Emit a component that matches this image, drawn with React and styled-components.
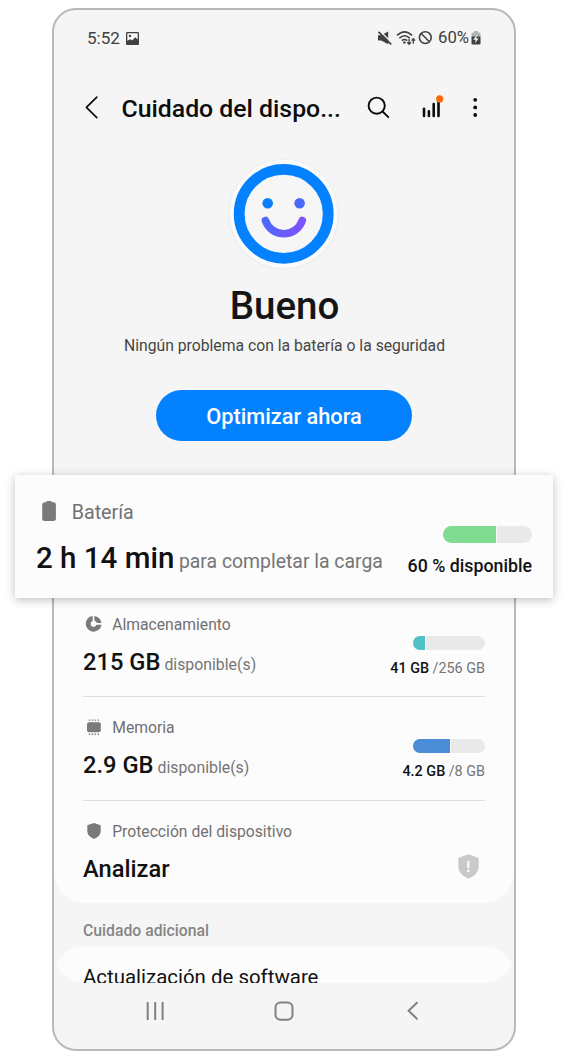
import React from "react";
import styled, { createGlobalStyle, css } from "styled-components";

const GlobalStyle = createGlobalStyle`
  *, *::before, *::after { box-sizing: border-box; }
  body { margin: 0; background: #fff; }
  svg { display: block; flex: none; overflow: visible; }
`;

const Page = styled.div`
  width: 568px;
  height: 1058px;
  padding: 8px 52px 7px;
  font-family: Roboto, "Liberation Sans", sans-serif;
  white-space: nowrap;
  color: #111;
`;

const Phone = styled.main`
  display: flex;
  flex-direction: column;
  height: 1043px;
  border: 2px solid #b9b9b9;
  border-radius: 24px;
  background: #f5f5f5;
`;

const StatusBar = styled.div`
  display: flex;
  align-items: center;
  justify-content: space-between;
  height: 56px;
  padding: 0 33px;
  color: #404040;
`;

const StatusGroup = styled.div`
  display: flex;
  align-items: center;
`;

const StatusGap = styled.span`
  width: ${(p) => (p.$small ? 2 : 4)}px;
`;

const Clock = styled.span`
  width: 39px;
  font-size: 17.1px;
  line-height: 20px;
`;

const BatteryLevel = styled.span`
  width: 33px;
  margin-left: 5px;
  font-size: 16.7px;
  line-height: 20px;
`;

const Header = styled.header`
  display: flex;
  align-items: center;
  height: 83px;
  padding: 0 36px 0 31px;
`;

const Title = styled.h1`
  flex: 1;
  margin: 1px 0 0 22.5px;
  font-size: 24.8px;
  font-weight: 500;
  line-height: 31px;
  color: #0c0c0c;
`;

const Actions = styled.div`
  display: flex;
  align-items: center;
  & > :nth-child(2) { margin: 0 27px 0 30px; }
`;

const Hero = styled.section`
  display: flex;
  flex-direction: column;
  align-items: center;
  height: 326px;
  padding-top: 10px;
`;

const State = styled.h2`
  margin: 14px 0 0 1px;
  font-size: 38.500px;
  font-weight: 500;
  line-height: 46px;
  color: #151515;
`;

const Summary = styled.p`
  margin: 7px 0 0 1px;
  font-size: 15.73px;
  line-height: 20px;
  color: #454545;
`;

const OptimizeButton = styled.button`
  width: 256px;
  height: 51px;
  margin-top: 34px;
  padding: 1px 0 0;
  border: 0;
  border-radius: 26px;
  background: #0381fe;
  color: #fff;
  font-family: inherit;
  font-size: 21.75px;
  font-weight: 500;
  line-height: 51px;
`;

const BatteryCard = styled.section`
  position: relative;
  z-index: 1;
  display: flex;
  justify-content: space-between;
  flex: none;
  height: 123px;
  margin: 0 -39px;
  padding: 25px 21px 0 21px;
  background: #fcfcfc;
  box-shadow: 0 2px 9px rgba(0, 0, 0, 0.25);
`;

const Panel = styled.section`
  flex: none;
  height: 305px;
  padding: 0 29px;
  border-radius: 0 0 31px 31px;
  background: #fcfcfc;
`;

const Item = styled.div`
  display: flex;
  justify-content: space-between;
  height: ${(p) => (p.$first ? 99 : 104)}px;
  padding-top: ${(p) => (p.$first ? 16 : 20)}px;
  ${(p) => !p.$last && css`border-bottom: 1px solid #e0e0e0;`}
`;

const Label = styled.div`
  display: flex;
  align-items: center;
  height: ${(p) => (p.$large ? 24 : 20)}px;
  padding-left: ${(p) => (p.$large ? 4.3 : 2)}px;
  gap: ${(p) => (p.$large ? 13.4 : 9.2)}px;
  font-size: ${(p) => (p.$large ? 19.7 : 15.7)}px;
  color: #717171;
  & > svg { margin-bottom: ${(p) => (p.$large ? 2 : 0)}px; }
`;

const Value = styled.div`
  display: flex;
  align-items: baseline;
  gap: ${(p) => (p.$large ? 4.6 : 4)}px;
  margin-top: ${(p) => (p.$large ? 17 : 13.5)}px;
  line-height: ${(p) => (p.$large ? 34 : 28)}px;
`;

const Amount = styled.strong`
  font-size: ${(p) => (p.$large ? 29.5 : 23.7)}px;
  font-weight: 500;
`;

const Unit = styled.span`
  font-size: ${(p) => (p.$large ? 19.4 : 15.85)}px;
  color: #757575;
`;

const Usage = styled.div`
  display: flex;
  flex-direction: column;
  align-items: flex-end;
  padding-top: ${(p) => (p.$large ? 26 : 22)}px;
`;

const Meter = styled.div`
  width: ${(p) => (p.$large ? 89 : 72)}px;
  height: ${(p) => (p.$large ? 17 : 14)}px;
  border-radius: 9px;
  background: #e9e9e9;
  overflow: hidden;
`;

const MeterFill = styled.div`
  height: 100%;
  border-right: 1px solid #f7f7f7;
  background: ${(p) => p.$color};
`;

const UsageText = styled.div`
  display: flex;
  gap: 3.4px;
  margin-top: ${(p) => (p.$large ? 12.5 : 8)}px;
  font-size: ${(p) => (p.$large ? 17.8 : 14.4)}px;
  line-height: ${(p) => (p.$large ? 20 : 21)}px;
  color: #757575;
  b { font-weight: 500; color: #111; }
`;

const ShieldSlot = styled.div`
  padding: 33px 6.5px 0 0;
`;

const SectionTitle = styled.h3`
  flex: none;
  height: 43px;
  margin: 0;
  padding: 18px 29px 0;
  font-size: 15.75px;
  font-weight: 500;
  line-height: 20px;
  color: #858585;
`;

const ScrollEdge = styled.div`
  flex: none;
  height: 37px;
  border-radius: 0 0 30px 30px;
  overflow: hidden;
`;

const LinkCard = styled.div`
  height: 80px;
  padding: 18px 29px 0;
  border-radius: 30px 30px 0 0;
  background: #fcfcfc;
  font-size: 20.45px;
  line-height: 26px;
`;

const NavBar = styled.nav`
  display: grid;
  grid-template-columns: repeat(3, 129px);
  justify-content: center;
  justify-items: center;
  align-items: center;
  height: 56px;
`;

const ImageIcon = () => (
  <svg width="13" height="13" viewBox="0 0 13 13">
    <path fill="#404040" fillRule="evenodd" d="M1.2 0h10.6Q13 0 13 1.2v10.6q0 1.2-1.2 1.2H1.2Q0 13 0 11.800V1.200Q0 0 1.200 0ZM1.300 1.300V8.800L4.300 7.200 6.200 8.600 9.200 5.200 11.700 7.600V1.300Z" />
    <circle cx="4" cy="3.900" r="1.200" fill="#404040" />
  </svg>
);

const MuteIcon = () => (
  <svg width="15" height="14" viewBox="0 0 15 14">
    <path fill="#404040" d="M0 4.300H3.200L10.200 .400V13.300L3.200 9.500H0Z" />
    <path stroke="#f5f5f5" strokeWidth="1.600" d="M2 .200 14.300 12.300" />
    <path stroke="#404040" strokeWidth="1.700" d="M.5 .800 13.200 13.400" />
  </svg>
);

const WifiIcon = () => (
  <svg width="20" height="14" viewBox="0 0 20 14" fill="none" stroke="#404040" strokeWidth="1.600">
    <path d="M0 4.400Q7.500-2.700 15.100 4.400M2.400 7.100Q7.500 2.400 12.700 7.100M4.800 9.700Q7.500 7.300 10.200 9.700" />
    <circle cx="7.400" cy="11.500" r="1.200" fill="#404040" stroke="none" />
    <path strokeWidth="1.300" d="M12.100 7.800V13M10.300 11.300l1.800 1.900 1.800-1.900M16.300 12.800V7.800M14.500 9.600l1.800-1.900 1.800 1.900" />
  </svg>
);

const BlockedIcon = () => (
  <svg width="14" height="14" viewBox="0 0 14 14" fill="none" stroke="#404040" strokeWidth="1.600">
    <circle cx="6.300" cy="6.600" r="5.900" />
    <path d="M2.200 2.500 10.400 10.700" />
  </svg>
);

const ChargingIcon = () => (
  <svg width="10" height="14" viewBox="0 0 10 14">
    <path fill="#b4b4b4" d="M3 0h4v1.500h1.300q1.200 0 1.200 1.200V6H.5V2.700q0-1.200 1.200-1.200H3Z" />
    <path fill="#404040" d="M.5 5.500h9v6.700q0 1.300-1.300 1.300H1.800q-1.300 0-1.300-1.300Z" />
    <path fill="#f5f5f5" d="M5.800 4 2.200 8.700H4.600L4 12 7.800 7.400H5.300Z" />
  </svg>
);

const BackIcon = () => (
  <svg width="14" height="24" viewBox="0 0 14 24" fill="none" stroke="#0c0c0c" strokeWidth="1.700" strokeLinecap="round" strokeLinejoin="round">
    <path d="M11.800 1.200 1.400 11.400 11.800 21.600" />
  </svg>
);

const SearchIcon = () => (
  <svg width="24" height="24" viewBox="0 0 24 24" fill="none" stroke="#0c0c0c" strokeWidth="1.900" strokeLinecap="round">
    <circle cx="9.700" cy="9.700" r="8.100" />
    <path d="M15.600 15.500 21.300 21.200" />
  </svg>
);

const ReportIcon = () => (
  <svg width="24" height="24" viewBox="0 0 24 24">
    <path stroke="#0c0c0c" strokeWidth="2.600" strokeLinecap="round" d="M3 12.700V20M7.900 15.300V20M12.700 8V20M17.500 4V20" />
    <circle cx="18.700" cy="2.900" r="3.600" fill="#fb6a0c" />
  </svg>
);

const MoreIcon = () => (
  <svg width="6" height="24" viewBox="0 0 6 24" fill="#0c0c0c">
    <circle cx="3.200" cy="3.800" r="1.900" />
    <circle cx="3.200" cy="11.400" r="1.900" />
    <circle cx="3.200" cy="19" r="1.900" />
  </svg>
);

const HappyFace = () => (
  <svg width="110" height="110" viewBox="0 0 110 110" fill="none">
    <defs>
      <linearGradient id="smile" x1="36" y1="58" x2="74" y2="70" gradientUnits="userSpaceOnUse">
        <stop offset="0" stopColor="#4b69fa" />
        <stop offset="1" stopColor="#8052ff" />
      </linearGradient>
    </defs>
    <circle cx="54.700" cy="55.200" r="54.700" stroke="#ededed" strokeWidth="1.200" />
    <circle cx="54.700" cy="54.800" r="54" fill="#fafafa" />
    <circle cx="54.700" cy="54.800" r="44.500" fill="#f6f6f6" stroke="#0381fe" strokeWidth="10.800" />
    <circle cx="38.700" cy="44.300" r="5.300" fill="#0b7efa" />
    <circle cx="70.600" cy="44.300" r="5.300" fill="#4b69fa" />
    <path d="M36.400 61.500A19.500 19.500 0 0 0 73.300 61.500" stroke="url(#smile)" strokeWidth="7.600" strokeLinecap="round" />
  </svg>
);

const BatteryIcon = () => (
  <svg width="18" height="20" viewBox="0 0 18 20" fill="#7a7a7a">
    <path d="M6.500 0h5v1.200H13.700Q15.900 1.400 15.900 3.600V17.500Q15.900 20 13.400 20H4.700Q2.200 20 2.200 17.500V3.600Q2.200 1.400 4.400 1.200H6.500Z" />
  </svg>
);

const StorageIcon = () => (
  <svg width="18" height="18" viewBox="0 0 18 18" fill="#7a7a7a">
    <path d="M7.700 .900A7.900 7.900 0 1 0 16.500 9.800H11.500A3 3 0 1 1 7.700 6.100Z" />
    <path d="M9.300 .900A7.900 7.900 0 0 1 16.500 8H12A4 4 0 0 0 9.300 5.500Z" />
  </svg>
);

const MemoryIcon = () => (
  <svg width="18" height="18" viewBox="0 0 18 18" fill="#7a7a7a">
    <rect x="2" y="4.300" width="13.800" height="10" rx="2" />
    <path stroke="#7a7a7a" strokeWidth="1.400" strokeDasharray="1.400 1.500" d="M3.800 2.100H14M3.800 16.300H14" />
  </svg>
);

const ShieldIcon = () => (
  <svg width="18" height="18" viewBox="0 0 18 18" fill="#7a7a7a">
    <path d="M9 1 15.700 3.300V9.200Q15.400 14.400 9 16.900 2.600 14.400 2.300 9.200V3.300Z" />
  </svg>
);

const AlertShieldIcon = () => (
  <svg width="21" height="25" viewBox="0 0 21 25">
    <path fill="#c9c9c9" d="M10.500 .200 20.200 3.800Q20.700 4 20.700 4.600V12.500Q20.500 20.600 10.500 24.800 .500 20.600 .300 12.500V4.600Q.300 4 .800 3.800Z" />
    <path stroke="#fcfcfc" strokeWidth="2.200" d="M10.300 7V14.300M10.300 15.700V18" />
  </svg>
);

const RecentsIcon = () => (
  <svg width="20" height="20" viewBox="0 0 20 20" stroke="#808080" strokeWidth="2">
    <path d="M2.700 1V19M10.200 1V19M17.600 1V19" />
  </svg>
);

const HomeIcon = () => (
  <svg width="20" height="20" viewBox="0 0 20 20" fill="none" stroke="#808080" strokeWidth="2">
    <rect x="1.500" y="1.500" width="17" height="17.200" rx="5" />
  </svg>
);

const NavBackIcon = () => (
  <svg width="20" height="20" viewBox="0 0 20 20" fill="none" stroke="#808080" strokeWidth="2">
    <path d="M14.500 1.300 5.600 9.800 14.500 18.400" />
  </svg>
);

function Gauge({ value, color, large, children }) {
  return (
    <Usage $large={large}>
      <Meter $large={large}>
        <MeterFill $color={color} style={{ width: `${value}%` }} />
      </Meter>
      <UsageText $large={large}>{children}</UsageText>
    </Usage>
  );
}

function Reading({ icon, label, amount, unit, large }) {
  return (
    <div>
      <Label $large={large}>
        {icon}
        <span>{label}</span>
      </Label>
      <Value $large={large}>
        <Amount $large={large}>{amount}</Amount>
        {unit && <Unit $large={large}>{unit}</Unit>}
      </Value>
    </div>
  );
}

export default function App() {
  return (
    <Page>
      <GlobalStyle />
      <Phone>
        <StatusBar>
          <StatusGroup>
            <Clock>5:52</Clock>
            <ImageIcon />
          </StatusGroup>
          <StatusGroup>
            <MuteIcon />
            <StatusGap />
            <WifiIcon />
            <StatusGap $small />
            <BlockedIcon />
            <BatteryLevel>60%</BatteryLevel>
            <ChargingIcon />
          </StatusGroup>
        </StatusBar>

        <Header>
          <BackIcon />
          <Title>Cuidado del dispo...</Title>
          <Actions>
            <SearchIcon />
            <ReportIcon />
            <MoreIcon />
          </Actions>
        </Header>

        <Hero>
          <HappyFace />
          <State>Bueno</State>
          <Summary>Ningún problema con la batería o la seguridad</Summary>
          <OptimizeButton>Optimizar ahora</OptimizeButton>
        </Hero>

        <BatteryCard>
          <Reading large icon={<BatteryIcon />} label="Batería" amount="2 h 14 min" unit="para completar la carga" />
          <Gauge large value={61} color="#80dc90">
            <b>60 % disponible</b>
          </Gauge>
        </BatteryCard>

        <Panel>
          <Item $first>
            <Reading icon={<StorageIcon />} label="Almacenamiento" amount="215 GB" unit="disponible(s)" />
            <Gauge value={18.5} color="#50c1c4">
              <b>41 GB</b>
              <span>/256 GB</span>
            </Gauge>
          </Item>
          <Item>
            <Reading icon={<MemoryIcon />} label="Memoria" amount="2.9 GB" unit="disponible(s)" />
            <Gauge value={53} color="#4a8cd6">
              <b>4.2 GB</b>
              <span>/8 GB</span>
            </Gauge>
          </Item>
          <Item $last>
            <Reading icon={<ShieldIcon />} label="Protección del dispositivo" amount="Analizar" />
            <ShieldSlot>
              <AlertShieldIcon />
            </ShieldSlot>
          </Item>
        </Panel>

        <SectionTitle>Cuidado adicional</SectionTitle>
        <ScrollEdge>
          <LinkCard>Actualización de software</LinkCard>
        </ScrollEdge>

        <NavBar>
          <RecentsIcon />
          <HomeIcon />
          <NavBackIcon />
        </NavBar>
      </Phone>
    </Page>
  );
}
